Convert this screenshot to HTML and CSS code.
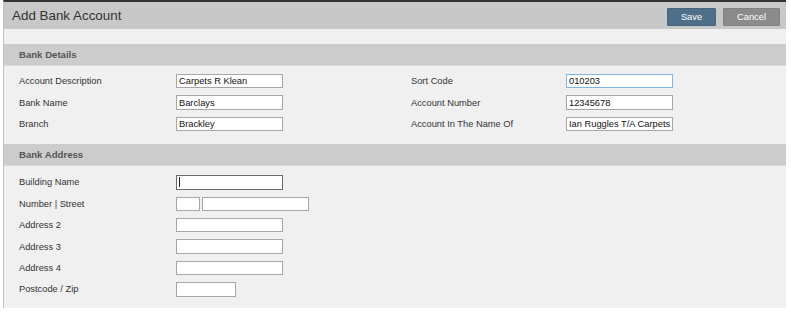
FILE: index.html
```html
<!DOCTYPE html>
<html>
<head>
<meta charset="utf-8">
<link rel="stylesheet" href="styles.css">
</head>
<body>
<div class="page">
  <div class="topbar">
    <div class="title">Add Bank Account</div>
    <div class="actions">
      <button class="btn btn-save">Save</button>
      <button class="btn btn-cancel">Cancel</button>
    </div>
  </div>
  <div class="strip"></div>

  <div class="section-head">Bank Details</div>
  <div class="section-body grid4">
    <label class="lbl">Account Description</label>
    <input class="field" type="text" value="Carpets R Klean">
    <label class="lbl">Sort Code</label>
    <input class="field field-blue" type="text" value="010203">

    <label class="lbl">Bank Name</label>
    <input class="field" type="text" value="Barclays">
    <label class="lbl">Account Number</label>
    <input class="field" type="text" value="12345678">

    <label class="lbl">Branch</label>
    <input class="field" type="text" value="Brackley">
    <label class="lbl">Account In The Name Of</label>
    <input class="field" type="text" value="Ian Ruggles T/A Carpets">
  </div>

  <div class="section-head">Bank Address</div>
  <div class="section-body section-addr grid2">
    <label class="lbl">Building Name</label>
    <span class="focus-wrap"><input class="field field-focus" type="text" value=""><span class="caret"></span></span>

    <label class="lbl">Number | Street</label>
    <span class="pair">
      <input class="field field-num" type="text" value="">
      <input class="field" type="text" value="">
    </span>

    <label class="lbl">Address 2</label>
    <input class="field" type="text" value="">

    <label class="lbl">Address 3</label>
    <input class="field" type="text" value="">

    <label class="lbl">Address 4</label>
    <input class="field" type="text" value="">

    <label class="lbl">Postcode / Zip</label>
    <input class="field field-post" type="text" value="">
  </div>
</div>
</body>
</html>
```

FILE: styles.css
```css
html, body {
  margin: 0;
  padding: 0;
  background: #ffffff;
}

body {
  font-family: "Liberation Sans", Arial, sans-serif;
  color: #333333;
}

.page {
  margin: 0 5px 0 3px;
  border-left: 1px solid #c4c4c4;
  border-top: 2px solid #333333;
}

.topbar {
  height: 27px;
  background: #c8c8c8;
  display: flex;
  align-items: center;
  justify-content: space-between;
  padding: 0 6px 0 8px;
}

.title {
  font-size: 13.4px;
  color: #333333;
  margin-top: -1px;
}

.actions {
  display: flex;
  gap: 7px;
  margin-top: 2px;
}

.btn {
  font-family: "Liberation Sans", Arial, sans-serif;
  font-size: 9.3px;
  color: #ffffff;
  height: 18px;
  padding: 0;
  border-radius: 1px;
  cursor: pointer;
}

.btn-save {
  width: 49px;
  background: #4f6e8a;
  border: 1px solid #466480;
}

.btn-cancel {
  width: 57px;
  background: #8b8b8b;
  border: 1px solid #828282;
}

.strip {
  height: 15px;
  background: #f0f0f0;
}

.section-head {
  height: 22px;
  line-height: 22px;
  background: #cccccc;
  padding-left: 15px;
  font-size: 9.6px;
  font-weight: bold;
  color: #555555;
  border-bottom: 1px solid #dadada;
  box-sizing: border-box;
}

.section-body {
  background: #f0f0f0;
  padding: 8px 0 13px 15px;
  display: grid;
  row-gap: 7px;
  align-items: center;
}

.section-addr {
  padding: 9px 0 11.5px 15px;
}

.grid4 {
  grid-template-columns: 157px 235px 155px 1fr;
}

.grid2 {
  grid-template-columns: 157px 1fr;
}

.lbl {
  font-size: 9.3px;
  color: #333333;
  line-height: 12px;
}

.field {
  box-sizing: border-box;
  width: 107px;
  height: 14.4px;
  margin: 0;
  padding: 0 2px;
  border: 1px solid #a6a6a6;
  background: #ffffff;
  font-family: "Liberation Sans", Arial, sans-serif;
  font-size: 9.3px;
  color: #111111;
  outline: none;
  display: block;
}

.field-blue {
  border-color: #7fb6e6;
}

.field-focus {
  border-color: #6a6a6a;
}

.focus-wrap {
  position: relative;
  display: block;
  width: 107px;
}

.caret {
  position: absolute;
  left: 3px;
  top: 2px;
  width: 1px;
  height: 10px;
  background: #222222;
}

.pair {
  display: flex;
  gap: 2px;
}

.field-num {
  width: 24px;
}

.field-post {
  width: 60px;
}
```
